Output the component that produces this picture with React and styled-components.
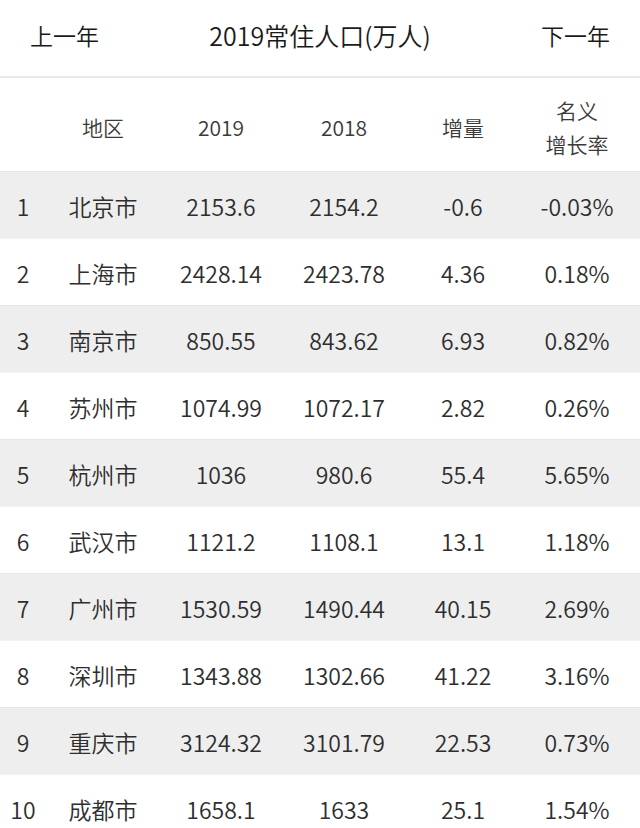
import styled, { createGlobalStyle } from "styled-components";

const GlobalStyle = createGlobalStyle`
    body {
        margin: 0;
        background: #ffffff;
        font-family: "Noto Sans CJK SC", "Noto Sans", sans-serif;
    }
`;

const rows = [
    ["1", "北京市", "2153.6", "2154.2", "-0.6", "-0.03%"],
    ["2", "上海市", "2428.14", "2423.78", "4.36", "0.18%"],
    ["3", "南京市", "850.55", "843.62", "6.93", "0.82%"],
    ["4", "苏州市", "1074.99", "1072.17", "2.82", "0.26%"],
    ["5", "杭州市", "1036", "980.6", "55.4", "5.65%"],
    ["6", "武汉市", "1121.2", "1108.1", "13.1", "1.18%"],
    ["7", "广州市", "1530.59", "1490.44", "40.15", "2.69%"],
    ["8", "深圳市", "1343.88", "1302.66", "41.22", "3.16%"],
    ["9", "重庆市", "3124.32", "3101.79", "22.53", "0.73%"],
    ["10", "成都市", "1658.1", "1633", "25.1", "1.54%"],
];

export default function App() {
    return (
        <>
            <GlobalStyle />
            <Page>
                <TopBar>
                    <NavText>上一年</NavText>
                    <Title>2019常住人口(万人)</Title>
                    <NavText>下一年</NavText>
                </TopBar>
                <HeadRow>
                    <Cell />
                    <Cell>地区</Cell>
                    <Cell>2019</Cell>
                    <Cell>2018</Cell>
                    <Cell>增量</Cell>
                    <Cell>名义<br />增长率</Cell>
                </HeadRow>
                {rows.map((r, i) => (
                    <Row key={r[0]} $shade={i % 2 === 0}>
                        {r.map((v, j) => (
                            <Cell key={j}>{v}</Cell>
                        ))}
                    </Row>
                ))}
            </Page>
        </>
    );
}

const Page = styled.div`
    width: 640px;
    height: 828px;
    overflow: hidden;
    font-weight: 350;
`;

const TopBar = styled.div`
    height: 78px;
    display: flex;
    align-items: center;
    justify-content: space-between;
    padding: 0 30px 6px;
    box-sizing: border-box;
    border-bottom: 2px solid #e9e9e9;
`;

const NavText = styled.div`
    font-size: 23px;
    color: #1a1a1a;
`;

const Title = styled.div`
    font-size: 25px;
    color: #1a1a1a;
`;

const grid = `
    display: grid;
    grid-template-columns: 46px 114px 122px 124px 114px 114px;
    align-items: center;
`;

const HeadRow = styled.div`
    ${grid}
    height: 93px;
    padding-top: 4px;
    box-sizing: border-box;
    font-size: 21px;
    line-height: 34px;
    color: #3a3a3a;
`;

const Row = styled.div`
    ${grid}
    height: 67px;
    padding-top: 2px;
    box-sizing: border-box;
    border-top: 1px solid ${(p) => (p.$shade ? "#e6e6e6" : "#f3f3f3")};
    background: ${(p) => (p.$shade ? "#eeeeee" : "#ffffff")};
    font-size: 23px;
    color: #2e2e2e;
`;

const Cell = styled.div`
    text-align: center;
`;
